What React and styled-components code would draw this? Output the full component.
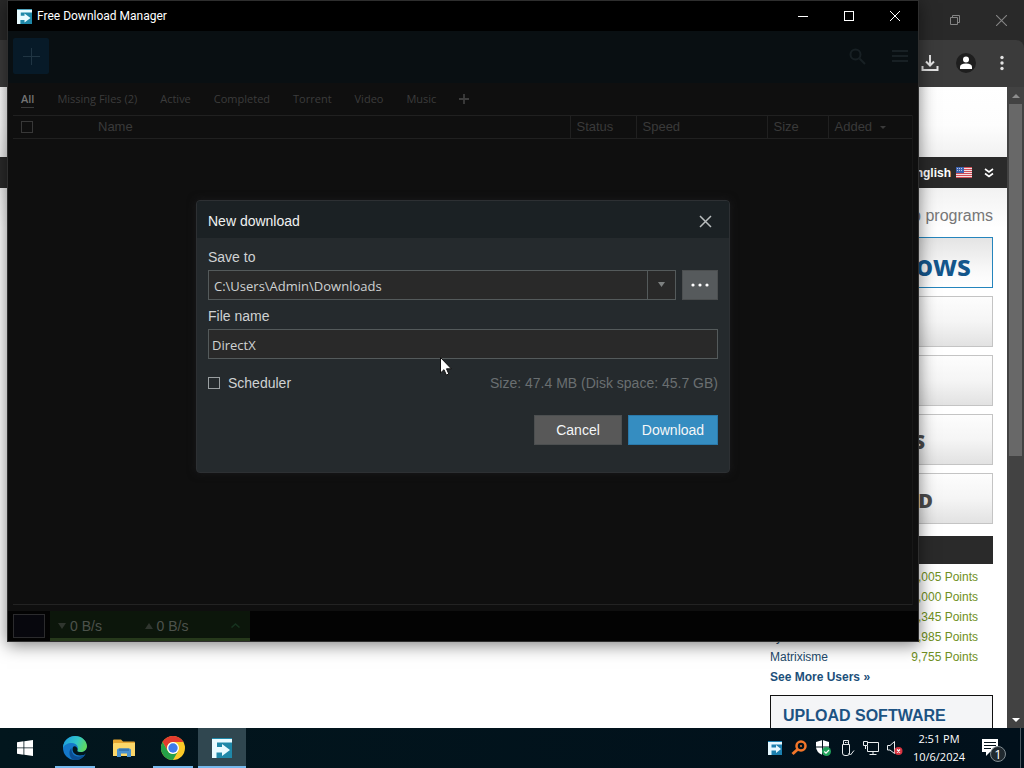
import React from "react";
import styled, { createGlobalStyle, css } from "styled-components";

const ui = '"Liberation Sans", Arial, sans-serif';
const segoe = '"Open Sans", "Noto Sans", sans-serif';

const Global = createGlobalStyle`
  *, *::before, *::after { box-sizing: border-box; }
  body { margin: 0; font-family: ${ui}; background: #fff; }
  button, input, select { font: inherit; color: inherit; margin: 0; }
  button { padding: 0; border: 0; background: none; cursor: pointer; }
  svg { display: block; flex: none; }
  a { text-decoration: none; }
`;

const Desktop = styled.div`
  display: grid;
  grid-template-rows: minmax(0, 1fr) 40px;
  height: 100vh;
  overflow: hidden;
`;

const Workspace = styled.div`
  position: relative;
  overflow: hidden;
`;

/* ---------- browser behind ---------- */

const Browser = styled.div`
  display: flex;
  flex-direction: column;
  height: 100%;
  background: #292929;
`;

const TabStrip = styled.div`
  display: flex;
  justify-content: flex-end;
  flex: none;
  height: 40px;
  color: #858585;
`;

const BrowserToolbar = styled.div`
  display: flex;
  justify-content: flex-end;
  align-items: center;
  flex: none;
  height: 47px;
  gap: 12px;
  padding: 0 13px 2px;
  background: #3b3b3b;
  border-radius: 0 8px 0 0;
  color: #e2e2e2;
`;

const CaptionButton = styled.button`
  display: grid;
  place-items: center;
  width: 46px;
`;

const IconButton = styled.button`
  display: grid;
  place-items: center;
  height: 24px;
`;

const Viewport = styled.div`
  display: flex;
  flex: 1;
  min-height: 0;
`;

const Page = styled.div`
  flex: 1;
  min-width: 0;
  overflow: hidden;
  background: #fff;
`;

const PageHeader = styled.div`
  height: 70px;
  background: linear-gradient(#fff, #fdfdfd 55%, #f1f1f1);
`;

const LanguageBar = styled.div`
  display: flex;
  justify-content: flex-end;
  align-items: center;
  gap: 12px;
  height: 31px;
  padding-right: 13px;
  background: #2a2a2a;
  color: #fff;
  font-size: 12px;
  font-weight: bold;
`;

const Language = styled.span`
  display: flex;
  align-items: center;
  gap: 5px;
`;

const PageBody = styled.div`
  display: flex;
  justify-content: flex-end;
  padding: 18px 14px 0 0;
  background: linear-gradient(#f2f2f2, #fff 40px);
`;

const Sidebar = styled.aside`
  width: 223px;
`;

const SideTitle = styled.h2`
  margin: 0;
  padding-bottom: 11px;
  color: #777;
  font-size: 16px;
  font-weight: normal;
  line-height: 20px;
  text-align: right;
`;

const Platforms = styled.div`
  display: grid;
  gap: 8px;
`;

const Platform = styled.button`
  height: 51px;
  padding: 5px ${(p) => p.$inset}px 0 0;
  border: 1px solid #c4c4c4;
  background: linear-gradient(#fdfdfd, #f5f5f5 50%, #e2e2e2);
  color: #4c4c4c;
  font-family: "Open Sans", sans-serif;
  font-size: 20px;
  font-weight: 800;
  line-height: 28px;
  text-align: right;
  ${(p) =>
    p.$current &&
    css`
      border-color: #2585bd;
      background: linear-gradient(#e4e4e4, #fafafa 70%, #fff);
      color: #14568b;
      font-size: 28px;
      font-weight: 700;
    `}
`;

const BlockHeading = styled.div`
  height: 28px;
  margin: 12px 0 3px;
  background: #2a2a2a;
`;

const Users = styled.table`
  width: 100%;
  border-collapse: collapse;
  font-size: 12px;
  line-height: 20px;
  td { padding: 0; }
`;

const UserName = styled.a`
  color: #23496b;
`;

const Points = styled.td`
  && { padding-right: 15px; }
  color: #6f8f22;
  text-align: right;
`;

const MoreLink = styled.a`
  display: block;
  color: #1c4f7a;
  font-size: 12px;
  font-weight: bold;
  line-height: 20px;
`;

const UploadBox = styled.a`
  display: block;
  height: 60px;
  margin-top: 8px;
  padding: 10px 12px;
  border: 1px solid #111;
  background: #f4f5f7;
  color: #1d5383;
  font-size: 16px;
  font-weight: bold;
  line-height: 20px;
`;

const ScrollTrack = styled.div`
  display: grid;
  grid-template-rows: 17px 1fr 17px;
  width: 17px;
  flex: none;
  background: #424242;
  justify-items: center;
  align-items: center;
  color: #8d8d8d;
`;

const ScrollThumb = styled.div`
  align-self: start;
  width: 13px;
  height: 58%;
  background: #686868;
`;

/* ---------- download manager ---------- */

const Window = styled.section`
  position: absolute;
  inset: 0 105px 86px 7px;
  display: flex;
  flex-direction: column;
  border: 1px solid #2e2e2e;
  background: #0f0f0f;
  box-shadow: 0 3px 16px rgba(0, 0, 0, 0.5);
`;

const TitleBar = styled.header`
  display: flex;
  align-items: center;
  height: 30px;
  flex: none;
  gap: 5px;
  padding-left: 9px;
  background: #000;
  color: #fff;
  font-family: Roboto, ${segoe};
  font-size: 12px;
`;

const TitleText = styled.span`
  flex: 1;
`;

const Controls = styled.div`
  display: flex;
  align-self: stretch;
`;

const Client = styled.div`
  position: relative;
  display: flex;
  flex-direction: column;
  flex: 1;
  min-height: 0;
  padding: 0 5px;
`;

const Toolbar = styled.div`
  display: flex;
  align-items: center;
  gap: 26px;
  height: 52px;
  flex: none;
  margin: 0 -5px;
  padding: 0 10px 2px 5px;
  background: #090f12;
  color: #182024;
`;

const AddButton = styled.button`
  display: grid;
  place-items: center;
  width: 36px;
  height: 36px;
  margin-right: auto;
  border-radius: 2px;
  background: #071a28;
  color: #203543;
`;

const Tabs = styled.nav`
  display: flex;
  align-items: center;
  gap: 23px;
  height: 32px;
  flex: none;
  padding-left: 8px;
  color: #3c3c3c;
  font-family: ${segoe};
  font-size: 11px;
  line-height: 16px;
`;

const Tab = styled.button`
  white-space: nowrap;
  ${(p) =>
    p.$active &&
    css`
      color: #747474;
      font-weight: 600;
      box-shadow: 0 1px 0 #3a3a3a;
    `}
`;

const TableArea = styled.div`
  flex: 1;
  min-height: 0;
  border-bottom: 1px solid #232323;
  border-right: 1px solid #171717;
`;

const Grid = styled.table`
  width: 100%;
  table-layout: fixed;
  border-collapse: collapse;
  color: #3a3a3a;
  font-size: 13px;
  th {
    height: 23px;
    padding: 0 0 0 6px;
    border: solid #202020;
    border-width: 1px 0;
    font-weight: normal;
    text-align: left;
    line-height: 16px;
  }
  th:first-child { padding-left: 8px; }
  th + th + th { border-left-width: 1px; }
`;

const Col = styled.col`
  width: ${(p) => p.$w}px;
`;

const SortLabel = styled.span`
  display: flex;
  align-items: center;
  gap: 8px;
`;

const Check = styled.input`
  appearance: none;
  display: block;
  width: 12px;
  height: 12px;
  flex: none;
  border: 1px solid ${(p) => (p.$dim ? "#383838" : "#9a9fa1")};
`;

const StatusBar = styled.footer`
  display: flex;
  align-items: center;
  gap: 5px;
  height: 30px;
  flex: none;
  margin: 6px -5px 0;
  padding-left: 5px;
  background: #030303;
`;

const PanelButton = styled.button`
  width: 32px;
  height: 24px;
  border: 1px solid #2b2b2d;
  background: #07070d;
`;

const SpeedPanel = styled.div`
  display: flex;
  align-items: center;
  width: 200px;
  height: 30px;
  padding: 2px 10px 0 8px;
  border-bottom: 3px solid #26391b;
  background: #0c160b;
  color: #4c524b;
  font-size: 14px;
`;

const Speed = styled.span`
  display: flex;
  align-items: center;
  gap: 4px;
  width: 87px;
  svg { color: #2f352e; }
`;

const PanelToggle = styled.button`
  margin-left: auto;
  color: #17331f;
`;

/* ---------- dialog ---------- */

const Overlay = styled.div`
  position: absolute;
  inset: 0;
  display: grid;
  place-items: center;
  pointer-events: none;
`;

const Dialog = styled.form`
  width: 534px;
  max-width: 100%;
  border: 1px solid #2d3033;
  border-radius: 4px;
  background: #252a2d;
  box-shadow: 0 0 8px #1a1a1c;
  color: #cfd2d3;
  font-size: 14px;
  pointer-events: auto;
`;

const DialogHeader = styled.header`
  display: flex;
  align-items: center;
  justify-content: space-between;
  height: 37px;
  padding: 4px 17px 0 11px;
  border-radius: 3px 3px 0 0;
  background: #1b2124;
  color: #f0f1f1;
`;

const DialogTitle = styled.h1`
  margin: 0;
  font-size: 14px;
  font-weight: normal;
`;

const DialogBody = styled.div`
  display: grid;
  padding: 9px 11px 27px;
`;

const FieldLabel = styled.label`
  line-height: 20px;
  margin-bottom: 3px;
`;

const fieldBox = css`
  width: 100%;
  min-width: 0;
  height: 30px;
  border: 1px solid #545a5b;
  border-radius: 0;
  background: #292929;
  font-family: ${segoe};
  font-size: 13px;
  outline: none;
`;

const FieldRow = styled.div`
  display: flex;
  gap: 6px;
  margin-bottom: 6px;
`;

const Combo = styled.div`
  display: grid;
  flex: 1;
`;

const PathSelect = styled.select`
  ${fieldBox}
  grid-area: 1 / 1;
  appearance: none;
  padding: 2px 30px 0 5px;
`;

const ComboArrow = styled.span`
  grid-area: 1 / 1;
  justify-self: end;
  display: grid;
  place-items: center;
  width: 29px;
  border: 1px solid #545a5b;
  color: #7d8080;
  pointer-events: none;
`;

const TextField = styled.input`
  ${fieldBox}
  padding: 2px 3px 0;
`;

const Browse = styled.button`
  display: grid;
  place-items: center;
  width: 36px;
  height: 30px;
  border: 1px solid #4c4f50;
  background: #565a5c;
  color: #fff;
`;

const OptionsRow = styled.div`
  display: flex;
  align-items: center;
  justify-content: space-between;
  height: 20px;
  margin-top: 8px;
  color: #6a6f71;
`;

const CheckLabel = styled.label`
  display: flex;
  align-items: center;
  gap: 8px;
  color: #cfd2d3;
`;

const Actions = styled.div`
  display: flex;
  justify-content: flex-end;
  gap: 6px;
  margin-top: 22px;
`;

const ActionButton = styled.button`
  width: ${(p) => (p.$primary ? 90 : 88)}px;
  height: 30px;
  border: 1px solid ${(p) => (p.$primary ? "#2a79aa" : "#4c4f50")};
  background: ${(p) => (p.$primary ? "#358dc1" : "#585858")};
  color: #f4f6f7;
`;

const Cursor = styled.svg`
  position: absolute;
  left: 43%;
  top: 357px;
`;

/* ---------- taskbar ---------- */

const Taskbar = styled.footer`
  display: flex;
  background: linear-gradient(90deg, #02161d, #01101b);
  color: #fff;
`;

const Apps = styled.div`
  display: flex;
  gap: 1px;
  flex: 1;
`;

const TaskButton = styled.button`
  display: grid;
  place-items: center;
  width: 48px;
  height: 40px;
  ${(p) =>
    p.$running &&
    css`
      background: linear-gradient(#76b9ed, #76b9ed) bottom / 40px 2px no-repeat;
    `}
  ${(p) =>
    p.$active &&
    css`
      background: linear-gradient(#76b9ed, #76b9ed) bottom / 100% 2px no-repeat #304750;
    `}
`;

const StartButton = styled(TaskButton)`
  width: 50px;
`;

const Tray = styled.div`
  display: flex;
  align-items: center;
  gap: 8px;
`;

const Clock = styled.time`
  display: grid;
  align-content: center;
  width: 72px;
  font-family: ${segoe};
  font-size: 11px;
  line-height: 18px;
  text-align: center;
`;

const Notifications = styled.button`
  width: 36px;
  padding-left: 2px;
  display: grid;
  place-items: center;
`;

const ShowDesktop = styled.button`
  width: 4px;
  margin-left: 9px;
  border-left: 1px solid #4b5860;
`;

/* ---------- drawings ---------- */

const FdmIcon = ({ size }) => (
  <svg width={size} height={size} viewBox="0 0 20 20" aria-hidden="true">
    <rect width="20" height="20" fill="#1f88a8" />
    <path d="M0 1H20V4.500H5V9H10V6L18 12L10 18V14.500H4.500V20H0Z" fill="#e9fbff" />
  </svg>
);

const Cross = ({ size, width = 1 }) => (
  <svg width={size} height={size} viewBox="0 0 10 10" stroke="currentColor" strokeWidth={width} aria-hidden="true">
    <path d="M0 0L10 10M10 0L0 10" />
  </svg>
);

const Triangle = ({ up, w = 8, h = 5 }) => (
  <svg width={w} height={h} viewBox="0 0 8 5" preserveAspectRatio="none" fill="currentColor" aria-hidden="true">
    <path d={up ? "M0 5L4 0L8 5Z" : "M0 0H8L4 5Z"} />
  </svg>
);

const Plus = ({ size, width = 1 }) => (
  <svg width={size} height={size} viewBox="0 0 16 16" stroke="currentColor" strokeWidth={width} aria-hidden="true">
    <path d="M8 0V16M0 8H16" />
  </svg>
);

const Flag = () => (
  <svg width="16" height="11" viewBox="0 0 16 11" aria-label="US flag">
    <rect width="16" height="11" fill="#f3dfe1" />
    <path d="M0 .5H16M0 2.5H16M0 4.5H16M0 6.5H16M0 8.5H16M0 10.5H16" stroke="#cf4b55" />
    <rect width="8" height="6" fill="#3d62ae" />
    <path d="M1 1.5H7M1 3.5H7" stroke="#b9c8e8" strokeDasharray="1 1" />
  </svg>
);

const EdgeIcon = () => (
  <svg width="24" height="24" viewBox="0 0 24 24" aria-hidden="true">
    <defs>
      <linearGradient id="edgeTop" x1="0" y1="0.3" x2="1" y2="0.6">
        <stop offset="0" stopColor="#1d9fe0" />
        <stop offset="0.55" stopColor="#32c6c6" />
        <stop offset="1" stopColor="#62d957" />
      </linearGradient>
    </defs>
    <circle cx="12" cy="12" r="12" fill="#1478c9" />
    <path d="M0 11C1 4 6 0 12 0C19 0 24 5 24 10.500C24 14 21 16 18 16C15 16 14 15 14.500 14C16 11 13.500 7 9 7C4.500 7 1 9 0 12Z" fill="url(#edgeTop)" />
    <path d="M8.500 12C8 18 12 21 17 20.500C19.500 20.200 21.500 19 22.500 18C20 22.500 15.500 24.500 11 24C6 22 5 15 8.500 12Z" fill="#0b4d91" />
    <path d="M10 11C8.500 15 11 19.500 17 19.500C20 19.500 22 18.500 23 17.500L24 24H27V14L24 10.500C24 14 21 16 18 16C14 16 14 15 14.500 14C15 12 12 9 10 11Z" fill="#02161d" />
  </svg>
);

const FolderIcon = () => (
  <svg width="22" height="19" viewBox="0 0 22 19" aria-hidden="true">
    <path d="M0 1.500Q0 .5 1 .5H8L10 2.500H21Q22 2.500 22 3.500V8H0Z" fill="#e3a531" />
    <path d="M1 4H22V17H0V5Z" fill="#fbd769" />
    <path d="M4 18V11Q4 9.500 5.500 9.500H16.500Q18 9.500 18 11V18H14V14.500H8V18Z" fill="#4891cf" />
    <path d="M6 9.500H16V12H6Z" fill="#3576b2" />
  </svg>
);

const ChromeIcon = () => (
  <svg width="24" height="24" viewBox="0 0 24 24" aria-hidden="true">
    <circle cx="12" cy="12" r="12" fill="#fbc927" />
    <path d="M1.600 6A12 12 0 0 1 22.400 6H12A6 6 0 0 0 6.800 15Z" fill="#e33b2e" />
    <path d="M1.600 6A12 12 0 0 0 12 24L17.200 15A6 6 0 0 1 6.800 15Z" fill="#25a148" />
    <circle cx="12" cy="12" r="6" fill="#fff" />
    <circle cx="12" cy="12" r="4.700" fill="#3e7bea" />
  </svg>
);

const platforms = [
  { name: "Windows", inset: 21, current: true },
  { name: "", inset: 0 },
  { name: "", inset: 0 },
  { name: "GAMES", inset: 67 },
  { name: "ANDROID", inset: 59 },
];

const users = [
  ["", "9,005"],
  ["", "9,000"],
  ["", "9,345"],
  ["sy", "9,985"],
  ["Matrixisme", "9,755"],
];

const tabs = ["All", "Missing Files (2)", "Active", "Completed", "Torrent", "Video", "Music"];

function BrowserWindow() {
  return (
    <Browser>
      <TabStrip>
        <CaptionButton aria-label="Restore">
          <svg width="10" height="10" viewBox="0 0 10 10" fill="none" stroke="currentColor" aria-hidden="true">
            <path d="M.5 2.500H7.500V9.500H.5ZM2.500 2.500V.5H9.500V7.500H7.500" />
          </svg>
        </CaptionButton>
        <CaptionButton aria-label="Close browser">
          <Cross size={11} />
        </CaptionButton>
      </TabStrip>
      <BrowserToolbar>
        <IconButton aria-label="Downloads">
          <svg width="18" height="18" viewBox="0 0 18 18" fill="none" stroke="currentColor" strokeWidth="2" aria-hidden="true">
            <path d="M9 1V11M5 7.500L9 11.500L13 7.500M1.500 12V16H16.500V12" />
          </svg>
        </IconButton>
        <IconButton aria-label="Profile">
          <svg width="30" height="24" viewBox="0 0 30 24" aria-hidden="true">
            <circle cx="15" cy="12" r="10" fill="#1e1e1e" />
            <circle cx="15" cy="8.500" r="3" fill="#fff" />
            <path d="M9 18V16Q9 12.500 15 12.500Q21 12.500 21 16V18Z" fill="#fff" />
          </svg>
        </IconButton>
        <IconButton aria-label="Browser menu">
          <svg width="18" height="16" viewBox="0 0 18 16" fill="currentColor" aria-hidden="true">
            <circle cx="9" cy="2.500" r="1.700" />
            <circle cx="9" cy="8" r="1.700" />
            <circle cx="9" cy="13.500" r="1.700" />
          </svg>
        </IconButton>
      </BrowserToolbar>
      <Viewport>
        <Page>
          <PageHeader />
          <LanguageBar>
            <Language>
              English <Flag />
            </Language>
            <svg width="10" height="10" viewBox="0 0 10 10" fill="none" stroke="#fff" strokeWidth="1.600" aria-hidden="true">
              <path d="M1 1L5 4L9 1M1 5.500L5 8.500L9 5.500" />
            </svg>
          </LanguageBar>
          <PageBody>
            <Sidebar>
              <SideTitle>Top programs</SideTitle>
              <Platforms>
                {platforms.map((p, i) => (
                  <Platform key={i} $inset={p.inset} $current={p.current}>
                    {p.name}
                  </Platform>
                ))}
              </Platforms>
              <BlockHeading />
              <Users>
                <tbody>
                  {users.map(([name, points]) => (
                    <tr key={points}>
                      <td>
                        <UserName href="#">{name}</UserName>
                      </td>
                      <Points>{points} Points</Points>
                    </tr>
                  ))}
                </tbody>
              </Users>
              <MoreLink href="#">See More Users »</MoreLink>
              <UploadBox href="#">UPLOAD SOFTWARE</UploadBox>
            </Sidebar>
          </PageBody>
        </Page>
        <ScrollTrack>
          <Triangle up h={4} />
          <ScrollThumb />
          <svg width="8" height="4" viewBox="0 0 8 4" fill="#fff" aria-hidden="true">
            <path d="M0 0H8L4 4Z" />
          </svg>
        </ScrollTrack>
      </Viewport>
    </Browser>
  );
}

function DownloadDialog() {
  return (
    <Dialog role="dialog" aria-labelledby="dialog-title" onSubmit={(e) => e.preventDefault()}>
      <DialogHeader>
        <DialogTitle id="dialog-title">New download</DialogTitle>
        <IconButton type="button" aria-label="Close dialog">
          <svg width="13" height="13" viewBox="0 0 13 13" stroke="#b9bdbe" strokeWidth="1.500" aria-hidden="true">
            <path d="M1 1L12 12M12 1L1 12" />
          </svg>
        </IconButton>
      </DialogHeader>
      <DialogBody>
        <FieldLabel htmlFor="folder">Save to</FieldLabel>
        <FieldRow>
          <Combo>
            <PathSelect id="folder">
              <option>C:\Users\Admin\Downloads</option>
            </PathSelect>
            <ComboArrow>
              <Triangle w={7} h={5} />
            </ComboArrow>
          </Combo>
          <Browse type="button" aria-label="Browse">
            <svg width="18" height="4" viewBox="0 0 18 4" fill="currentColor" aria-hidden="true">
              <circle cx="2" cy="2" r="1.600" />
              <circle cx="9" cy="2" r="1.600" />
              <circle cx="16" cy="2" r="1.600" />
            </svg>
          </Browse>
        </FieldRow>
        <FieldLabel htmlFor="filename">File name</FieldLabel>
        <FieldRow>
          <TextField id="filename" defaultValue="DirectX" />
        </FieldRow>
        <OptionsRow>
          <CheckLabel>
            <Check type="checkbox" />
            Scheduler
          </CheckLabel>
          <span>Size: 47.4 MB (Disk space: 45.7 GB)</span>
        </OptionsRow>
        <Actions>
          <ActionButton type="button">Cancel</ActionButton>
          <ActionButton type="submit" $primary>
            Download
          </ActionButton>
        </Actions>
      </DialogBody>
    </Dialog>
  );
}

function DownloadManager() {
  return (
    <Window>
      <TitleBar>
        <FdmIcon size={15} />
        <TitleText>Free Download Manager</TitleText>
        <Controls>
          <CaptionButton aria-label="Minimize">
            <svg width="10" height="1" aria-hidden="true">
              <rect width="10" height="1" fill="#fff" />
            </svg>
          </CaptionButton>
          <CaptionButton aria-label="Maximize">
            <svg width="10" height="10" aria-hidden="true">
              <rect x=".5" y=".5" width="9" height="9" fill="none" stroke="#fff" />
            </svg>
          </CaptionButton>
          <CaptionButton aria-label="Close">
            <Cross size={10} />
          </CaptionButton>
        </Controls>
      </TitleBar>
      <Client>
        <Toolbar>
          <AddButton aria-label="Add download">
            <Plus size={17} />
          </AddButton>
          <IconButton aria-label="Search">
            <svg width="17" height="17" viewBox="0 0 17 17" fill="none" stroke="currentColor" strokeWidth="2" aria-hidden="true">
              <circle cx="6.500" cy="6.500" r="5" />
              <path d="M10.500 10.500L16 16" />
            </svg>
          </IconButton>
          <IconButton aria-label="Menu">
            <svg width="16" height="14" viewBox="0 0 16 14" stroke="currentColor" strokeWidth="2" aria-hidden="true">
              <path d="M0 2H16M0 7H16M0 12H16" />
            </svg>
          </IconButton>
        </Toolbar>
        <Tabs>
          {tabs.map((t, i) => (
            <Tab key={t} $active={i === 0}>
              {t}
            </Tab>
          ))}
          <Tab aria-label="Add tag">
            <Plus size={10} width={3} />
          </Tab>
        </Tabs>
        <TableArea>
          <Grid>
            <colgroup>
              <Col $w={79} />
              <col />
              <Col $w={66} />
              <Col $w={131} />
              <Col $w={61} />
              <Col $w={84} />
            </colgroup>
            <thead>
              <tr>
                <th>
                  <Check type="checkbox" $dim aria-label="Select all" />
                </th>
                <th>Name</th>
                <th>Status</th>
                <th>Speed</th>
                <th>Size</th>
                <th>
                  <SortLabel>
                    Added <Triangle w={6} h={3} />
                  </SortLabel>
                </th>
              </tr>
            </thead>
          </Grid>
        </TableArea>
        <StatusBar>
          <PanelButton aria-label="Snail mode" />
          <SpeedPanel>
            <Speed>
              <Triangle h={6} /> 0 B/s
            </Speed>
            <Speed>
              <Triangle up h={6} /> 0 B/s
            </Speed>
            <PanelToggle aria-label="Expand">
              <svg width="9" height="5" viewBox="0 0 9 5" fill="none" stroke="currentColor" strokeWidth="1.500" aria-hidden="true">
                <path d="M.5 4.500L4.500 1L8.500 4.500" />
              </svg>
            </PanelToggle>
          </SpeedPanel>
        </StatusBar>
        <Overlay>
          <DownloadDialog />
        </Overlay>
      </Client>
    </Window>
  );
}

function SystemTaskbar() {
  return (
    <Taskbar>
      <Apps>
        <StartButton aria-label="Start">
          <svg width="16" height="16" viewBox="0 0 16 16" fill="#fff" aria-hidden="true">
            <path d="M0 2.200L6.500 1.300V7.500H0ZM7.300 1.200L16 0V7.500H7.300ZM0 8.300H6.500V14.700L0 13.800ZM7.300 8.300H16V16L7.300 14.800Z" />
          </svg>
        </StartButton>
        <TaskButton $running aria-label="Edge">
          <EdgeIcon />
        </TaskButton>
        <TaskButton aria-label="File Explorer">
          <FolderIcon />
        </TaskButton>
        <TaskButton $running aria-label="Chrome">
          <ChromeIcon />
        </TaskButton>
        <TaskButton $active aria-label="Free Download Manager">
          <FdmIcon size={20} />
        </TaskButton>
      </Apps>
      <Tray>
        <svg width="16" height="16" viewBox="0 0 16 16" aria-hidden="true">
          <rect x="1" y="1" width="14" height="14" fill="#1c7fae" />
          <path d="M1 2H15V4.500H4.500V7.500H9V5L14 9L9 13V10.500H4.500V15H1Z" fill="#e6f8ff" />
        </svg>
        <svg width="16" height="16" viewBox="0 0 16 16" fill="none" stroke="#f2762a" aria-hidden="true">
          <circle cx="10" cy="6" r="4.500" strokeWidth="2.500" />
          <path d="M6.500 9.500L1.500 14" strokeWidth="3" />
          <circle cx="10" cy="6" r="1" fill="#f2762a" stroke="none" />
        </svg>
        <svg width="16" height="16" viewBox="0 0 16 16" aria-hidden="true">
          <path d="M7.500 0L14 2V7Q14 12 7.500 15Q1 12 1 7V2Z" fill="#fff" />
          <path d="M7.500 0V15M1 7H14" stroke="#03121b" />
          <circle cx="11.500" cy="11.500" r="4.500" fill="#23a35c" />
          <path d="M9.300 11.500L11 13.200L14 10" stroke="#fff" strokeWidth="1.200" fill="none" />
        </svg>
        <svg width="16" height="18" viewBox="0 0 16 18" fill="none" stroke="#e9edef" aria-hidden="true">
          <path d="M4.500 5.500V1.500H9.500V5.500M3.500 5.500H10.500V14Q10.500 16.500 8 16.500H6Q3.500 16.500 3.500 14ZM6.500 3V4M8 3V4M9.500 14L11.500 16L15 11.500" />
        </svg>
        <svg width="16" height="16" viewBox="0 0 16 16" fill="none" stroke="#e9edef" aria-hidden="true">
          <path d="M4.500 2.500H15.500V11.500H4.500V6M.5 1.500H4.500V5.500H.5ZM2.500 5.500V9M10 11.500V14.500M6.500 14.500H13.500" />
        </svg>
        <svg width="16" height="16" viewBox="0 0 16 16" fill="none" aria-hidden="true">
          <path d="M.5 5.500H3L7.500 1.500V13.500L3 10H.5Z" stroke="#e9edef" />
          <circle cx="11.500" cy="11" r="4" fill="#d83440" />
          <path d="M10 9.500L13 12.500M13 9.500L10 12.500" stroke="#fff" strokeWidth="1.300" />
        </svg>
      </Tray>
      <Clock>
        <span>2:51 PM</span>
        <span>10/6/2024</span>
      </Clock>
      <Notifications aria-label="1 notification">
        <svg width="28" height="28" viewBox="0 0 28 28" aria-hidden="true">
          <path d="M2 5H18V18H10L6 22V18H2Z" fill="#fff" />
          <path d="M4 8.500H16M4 11.500H16M4 14.500H11" stroke="#03121b" />
          <circle cx="18" cy="20" r="7.500" fill="#20292f" stroke="#7f8a90" />
          <text x="18" y="25" fill="#fff" fontFamily="Open Sans, sans-serif" fontSize="13" textAnchor="middle">
            1
          </text>
        </svg>
      </Notifications>
      <ShowDesktop aria-label="Show desktop" />
    </Taskbar>
  );
}

export default function App() {
  return (
    <Desktop>
      <Global />
      <Workspace>
        <BrowserWindow />
        <DownloadManager />
        <Cursor width="12" height="19" viewBox="0 0 12 19" aria-hidden="true">
          <path d="M.5 .5V16L4 12.700L6.300 18L8.800 17L6.500 11.800H11.300Z" fill="#fff" stroke="#111" />
        </Cursor>
      </Workspace>
      <SystemTaskbar />
    </Desktop>
  );
}
